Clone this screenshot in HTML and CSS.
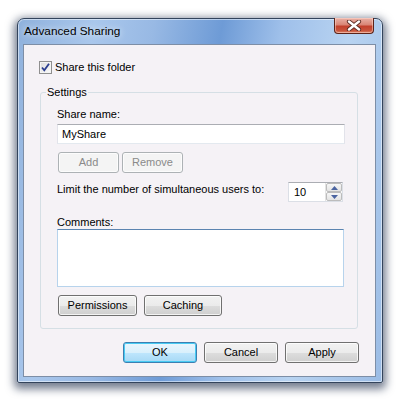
FILE: index.html
```html
<!DOCTYPE html>
<html>
<head>
<meta charset="utf-8">
<link rel="stylesheet" href="styles.css">
</head>
<body>
<div class="stage">
  <div class="window">
    <div class="titlebar">
      <div class="title">Advanced Sharing</div>
      <div class="close">
        <svg width="16" height="11" viewBox="0 0 16 11"><path d="M3 1.5 L13 9.5 M13 1.5 L3 9.5" stroke="#5a2a22" stroke-width="4.2" stroke-linecap="round"/><path d="M3 1.5 L13 9.5 M13 1.5 L3 9.5" stroke="#ffffff" stroke-width="2.4" stroke-linecap="round"/></svg>
      </div>
    </div>
    <div class="client">
      <div class="check-row">
        <span class="checkbox">
          <svg width="11" height="11" viewBox="0 0 11 11"><path d="M2 5.5 L4.3 8.3 L9 1.8" fill="none" stroke="#2a3d8f" stroke-width="1.8"/></svg>
        </span>
        <span>Share this folder</span>
      </div>
      <fieldset class="group">
        <legend>Settings</legend>
        <div class="label first">Share name:</div>
        <div class="textbox">MyShare</div>
        <div class="btn-row small">
          <div class="btn disabled w61">Add</div>
          <div class="btn disabled w61">Remove</div>
        </div>
        <div class="limit-row">
          <div class="label">Limit the number of simultaneous users to:</div>
          <div class="spin">
            <div class="spin-text">10</div>
            <div class="spin-btns">
              <div class="spin-btn"><svg width="7" height="4" viewBox="0 0 7 4"><path d="M0 4 L3.5 0 L7 4Z" fill="#4b64a0"/></svg></div>
              <div class="spin-btn"><svg width="7" height="4" viewBox="0 0 7 4"><path d="M0 0 L3.5 4 L7 0Z" fill="#4b64a0"/></svg></div>
            </div>
          </div>
        </div>
        <div class="label comments">Comments:</div>
        <div class="textarea"></div>
        <div class="btn-row perm">
          <div class="btn w79">Permissions</div>
          <div class="btn w78">Caching</div>
        </div>
      </fieldset>
      <div class="dialog-btns">
        <div class="btn default w74">OK</div>
        <div class="btn w74">Cancel</div>
        <div class="btn w74">Apply</div>
      </div>
    </div>
  </div>
</div>
</body>
</html>
```
FILE: styles.css
```css
html, body {
  margin: 0;
  padding: 0;
  background: #ffffff;
}
body {
  width: 407px;
  height: 407px;
  overflow: hidden;
  font-family: "Liberation Sans", Arial, sans-serif;
  font-size: 11px;
  color: #000;
}
.stage {
  padding: 18px 0 0 17px;
}
.window {
  width: 364px;
  height: 363px;
  border: 1px solid #33445c;
  border-radius: 7px 7px 2px 2px;
  background: linear-gradient(100deg, #8fb1dc 0%, #a9c7ec 18%, #98b9e4 32%, #6e9bd6 48%, #9fc0ea 62%, #b8d3f1 78%, #9bbce5 100%);
  box-shadow: 0 3px 8px 3px rgba(25, 40, 70, 0.6), inset 0 0 0 1px rgba(255,255,255,0.5);
  display: flex;
  flex-direction: column;
}
.titlebar {
  height: 25px;
  display: flex;
  align-items: flex-start;
}
.title {
  margin: 5px 0 0 6px;
  line-height: 14px;
  font-size: 11.8px;
  flex: 1;
  text-shadow: 0 0 6px rgba(255,255,255,0.9);
}
.close {
  width: 38px;
  height: 15px;
  margin: -1px 8px 0 0;
  border: 1px solid #5c2319;
  border-top: none;
  border-radius: 0 0 4px 4px;
  background: linear-gradient(#e9b1a6 0%, #d98676 45%, #c2402c 55%, #c8553d 85%, #e08a6d 100%);
  box-shadow: inset 0 0 0 1px rgba(255,220,210,0.5);
  display: flex;
  align-items: center;
  justify-content: center;
}
.client {
  flex: 1;
  margin: 0 6px 5px 5px;
  border: 1px solid #7d8ea6;
  background: #f5f2f6;
  display: flex;
  flex-direction: column;
}
.check-row {
  margin: 16px 0 0 15px;
  height: 13px;
  line-height: 13px;
  display: flex;
  align-items: center;
  gap: 3px;
}
.checkbox {
  width: 11px;
  height: 11px;
  border: 1px solid #8f8f8f;
  background: linear-gradient(135deg, #dcdcdc, #fbfbfb);
  box-shadow: inset 0 0 0 1px #f4f4f4;
  display: flex;
}
.group {
  margin: 11px 17px 0 16px;
  padding: 0 12px 12px 16px;
  border: 1px solid #d5dfe5;
  border-radius: 3px;
  min-width: 0;
}
.group legend {
  margin-left: -11px;
  padding: 0 1px;
  line-height: 14px;
}
.label {
  line-height: 14px;
}
.label.first {
  margin-top: 8px;
}
.textbox {
  margin-top: 3px;
  height: 18px;
  line-height: 18px;
  padding: 0 4px;
  background: #fff;
  border: 1px solid #dbdfe6;
  border-top-color: #abadb3;
  border-left-color: #e2e3ea;
  border-right-color: #e2e3ea;
  border-bottom-color: #e3e9ef;
}
.btn-row {
  display: flex;
}
.btn-row.small {
  margin: 8px 0 0 1px;
  gap: 3px;
}
.btn-row.perm {
  margin: 8px 0 0 1px;
  gap: 7px;
}
.btn {
  height: 19px;
  line-height: 19px;
  text-align: center;
  border: 1px solid #707070;
  border-radius: 3px;
  background: linear-gradient(#f2f2f2 0%, #ebebeb 50%, #dddddd 51%, #cfcfcf 100%);
  box-shadow: inset 0 0 0 1px rgba(255,255,255,0.75);
}
.btn.disabled {
  color: #8a8a8a;
  border-color: #adb2b5;
  background: #f4f4f4;
  box-shadow: inset 0 0 0 1px #fcfcfc;
}
.btn.default {
  border-color: #3c7fb1;
  background: linear-gradient(#eaf6fd 0%, #d9f0fc 50%, #bee6fd 51%, #a7d9f5 100%);
  box-shadow: inset 0 0 0 1px #48cbf3;
}
.w61 { width: 59px; }
.w79 { width: 77px; }
.w78 { width: 76px; }
.w74 { width: 72px; }
.limit-row {
  margin-top: 9px;
  display: flex;
  align-items: flex-start;
}
.limit-row .label {
  flex: 1;
}
.spin {
  width: 53px;
  height: 18px;
  margin-right: 2px;
  border: 1px solid #dbdfe6;
  border-top-color: #abadb3;
  background: #fff;
  display: flex;
}
.spin-text {
  flex: 1;
  line-height: 18px;
  padding-left: 5px;
}
.spin-btns {
  width: 16px;
  display: flex;
  flex-direction: column;
  border-left: 1px solid #e3e3e3;
}
.spin-btn {
  flex: 1;
  display: flex;
  align-items: center;
  justify-content: center;
  border: 1px solid #bcbcbc;
  border-radius: 2px;
  background: linear-gradient(#f7f7f7, #e3e3e3);
}
.label.comments {
  margin-top: 13px;
}
.textarea {
  height: 56px;
  margin-right: 1px;
  background: #fff;
  border: 1px solid #b7d3ec;
  border-top-color: #5b84b0;
}
.dialog-btns {
  margin-top: 13px;
  padding-right: 16px;
  display: flex;
  justify-content: flex-end;
  gap: 7px;
}
```
